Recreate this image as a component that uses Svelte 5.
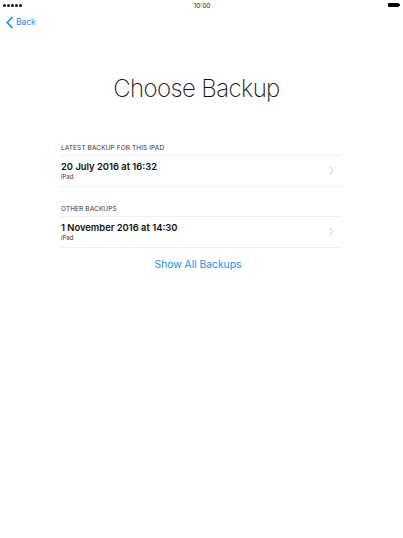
<script lang="ts">
  const sections = [
    { title: 'LATEST BACKUP FOR THIS IPAD', date: '20 July 2016 at 16:32', device: 'iPad' },
    { title: 'OTHER BACKUPS', date: '1 November 2016 at 14:30', device: 'iPad' },
  ]
</script>

<div class="screen">
  <div class="status">
    <div class="signal">
      {#each [0, 1, 2, 3, 4] as i (i)}
        <span class="dot"></span>
      {/each}
    </div>
    <span class="time">10:00</span>
    <div class="battery"><span class="cell"></span><span class="tip"></span></div>
  </div>

  <div class="nav">
    <svg width="8" height="13" viewBox="0 0 8 13" aria-hidden="true">
      <path d="M6.5 1 L1.2 6.5 L6.5 12" fill="none" stroke="#1a8cf7" stroke-width="1.6" />
    </svg>
    <span>Back</span>
  </div>

  <h1>Choose Backup</h1>

  <div class="content">
    {#each sections as s (s.title)}
      <section>
        <div class="label">{s.title}</div>
        <div class="row">
          <div>
            <div class="date">{s.date}</div>
            <div class="device">{s.device}</div>
          </div>
          <svg class="chevron" width="5" height="9" viewBox="0 0 5 9" aria-hidden="true">
            <path d="M0.7 0.7 L4.2 4.5 L0.7 8.3" fill="none" stroke="#c8c8cc" stroke-width="1" />
          </svg>
        </div>
      </section>
    {/each}
    <div class="show-all">Show All Backups</div>
  </div>
</div>

<style>
  :global(body) {
    background: #fff;
  }

  .screen {
    width: 403px;
    height: 538px;
    background: #fff;
    overflow: hidden;
    font-family: Inter, "Liberation Sans", sans-serif;
    color: #111;
  }

  .status {
    display: grid;
    grid-template-columns: 1fr auto 1fr;
    align-items: center;
    height: 10px;
    padding: 0 2px 0 3px;
  }

  .signal {
    display: flex;
    gap: 1px;
  }

  .dot {
    width: 3px;
    height: 3px;
    border-radius: 50%;
    background: #111;
  }

  .time {
    padding-top: 1px;
    font-size: 6.6px;
    color: #222;
  }

  .battery {
    display: flex;
    align-items: center;
    justify-content: flex-end;
    padding-right: 1px;
  }

  .cell {
    width: 11px;
    height: 4px;
    background: #000;
    border-radius: 1px;
  }

  .tip {
    width: 1px;
    height: 2px;
    background: #000;
  }

  .nav {
    display: flex;
    align-items: center;
    gap: 2px;
    margin-top: 5px;
    padding-left: 6px;
    height: 14px;
    color: #1a8cf7;
    font-size: 8.4px;
  }

  h1 {
    margin: 45px 0 0;
    padding-right: 10px;
    height: 30px;
    line-height: 30px;
    text-align: center;
    font-size: 24px;
    font-weight: 200;
    letter-spacing: -0.6px;
    color: #111;
  }

  .content {
    margin: 40px 61px 0;
  }

  .label {
    font-size: 6.5px;
    line-height: 8px;
    letter-spacing: 0.1px;
    color: #333;
    padding-bottom: 3px;
  }

  section {
    margin-bottom: 18px;
  }

  .row {
    display: flex;
    align-items: center;
    justify-content: space-between;
    height: 30px;
    padding-right: 8px;
    border-top: 1px solid #efeff0;
    border-bottom: 1px solid #efeff0;
  }

  .chevron {
    margin-bottom: 2px;
  }

  .date {
    font-size: 9.4px;
    line-height: 10px;
    font-weight: 600;
    color: #111;
  }

  .device {
    padding-top: 1px;
    font-size: 6px;
    line-height: 8px;
    color: #333;
  }

  .show-all {
    margin-top: -9px;
    padding-right: 7px;
    text-align: center;
    font-size: 10.3px;
    line-height: 14px;
    color: #1a8cf7;
  }
</style>
